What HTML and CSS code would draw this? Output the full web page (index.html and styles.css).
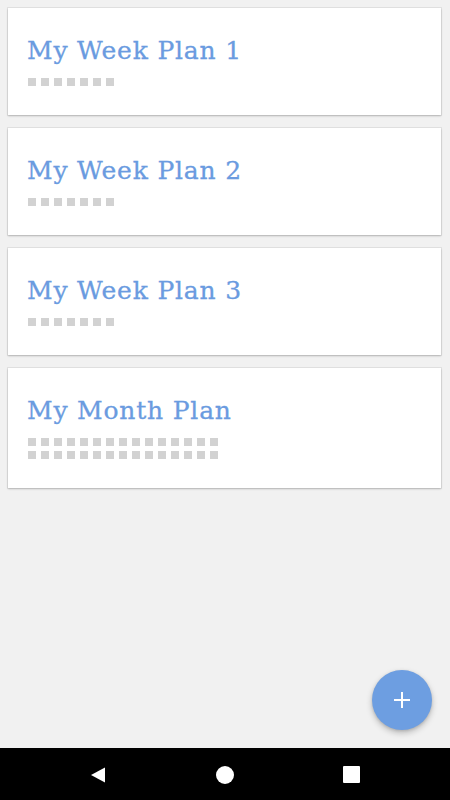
FILE: index.html
```html
<!DOCTYPE html>
<html>
<head>
<meta charset="utf-8">
<link rel="stylesheet" href="styles.css">
</head>
<body>
<div class="screen">
  <main class="content">
    <div class="card">
      <div class="title">My Week Plan 1</div>
      <div class="days days-week"><i></i><i></i><i></i><i></i><i></i><i></i><i></i></div>
    </div>
    <div class="card">
      <div class="title">My Week Plan 2</div>
      <div class="days days-week"><i></i><i></i><i></i><i></i><i></i><i></i><i></i></div>
    </div>
    <div class="card">
      <div class="title">My Week Plan 3</div>
      <div class="days days-week"><i></i><i></i><i></i><i></i><i></i><i></i><i></i></div>
    </div>
    <div class="card">
      <div class="title">My Month Plan</div>
      <div class="days days-month"><i></i><i></i><i></i><i></i><i></i><i></i><i></i><i></i><i></i><i></i><i></i><i></i><i></i><i></i><i></i><i></i><i></i><i></i><i></i><i></i><i></i><i></i><i></i><i></i><i></i><i></i><i></i><i></i><i></i><i></i></div>
    </div>
    <button class="fab" aria-label="Add">
      <svg width="18" height="18" viewBox="0 0 18 18"><path d="M9 1v16M1 9h16" stroke="#fff" stroke-width="2" fill="none"/></svg>
    </button>
  </main>
  <nav class="navbar">
    <svg class="nav-back" width="16" height="16" viewBox="0 0 16 16"><path d="M15 0.5V15.5L1 8Z" fill="#fff"/></svg>
    <span class="nav-home"></span>
    <span class="nav-recent"></span>
  </nav>
</div>
</body>
</html>
```
FILE: styles.css
```css
* { box-sizing: border-box; }
html, body { margin: 0; padding: 0; }
body {
  background: #f1f1f1;
  font-family: "DejaVu Serif", "Liberation Serif", serif;
}
.screen {
  width: 450px;
  height: 800px;
  display: flex;
  flex-direction: column;
}
.content {
  position: relative;
  flex: 1;
  padding: 8px 9px 8px 8px;
  display: flex;
  flex-direction: column;
  gap: 13px;
}
.card {
  background: #fff;
  padding: 28px 19px 29px 20px;
  box-shadow: 0 0 0 1px rgba(0,0,0,0.06), 0 1px 2px rgba(0,0,0,0.22);
}
.title {
  color: #6a9be0;
  font-size: 25px;
  letter-spacing: 0.8px;
  line-height: 30px;
  height: 30px;
  margin-left: -1px;
  -webkit-text-stroke: 0.3px #6a9be0;
}
.days {
  margin-top: 12px;
  display: grid;
  grid-template-columns: repeat(15, 8px);
  gap: 5px;
}
.days i {
  display: block;
  width: 8px;
  height: 8px;
  background: #d2d2d2;
}
.fab {
  position: absolute;
  right: 18px;
  bottom: 18px;
  width: 60px;
  height: 60px;
  border-radius: 50%;
  border: none;
  padding: 0;
  background: #6d9ee1;
  display: flex;
  align-items: center;
  justify-content: center;
  box-shadow: 0 3px 6px rgba(0,0,0,0.22), 0 1px 3px rgba(0,0,0,0.12);
}
.fab svg { display: block; }
.navbar {
  height: 52px;
  background: #000;
  display: flex;
  align-items: center;
  padding-top: 1px;
}
.nav-back { margin-left: 90px; display: block; }
.nav-home {
  width: 18px;
  height: 18px;
  border-radius: 50%;
  background: #fff;
  margin-left: 110px;
}
.nav-recent {
  width: 17px;
  height: 17px;
  background: #fff;
  border-radius: 1px;
  margin-left: 109px;
}
```
